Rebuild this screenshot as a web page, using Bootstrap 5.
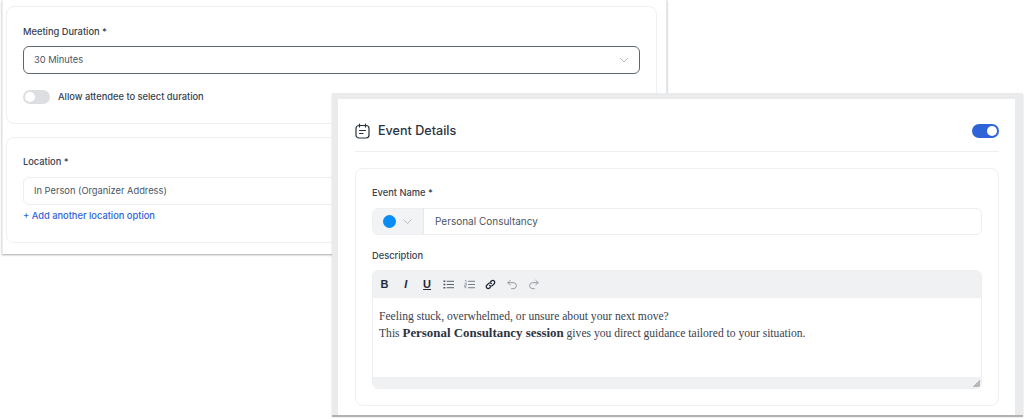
<!DOCTYPE html>
<html lang="en">
<head>
  <meta charset="UTF-8">
  <title>Event Settings</title>
  <meta name="viewport" content="width=device-width, initial-scale=1">
  <link href="https://cdn.jsdelivr.net/npm/bootstrap@5.3.3/dist/css/bootstrap.min.css" rel="stylesheet">
  <style>
    html, body { height: 419px; overflow: hidden; }
    body {
      background: #fff;
      font-family: Inter, "Liberation Sans", sans-serif;
      color: #374151;
      position: relative;
    }
    /* two overlapping screenshots on a free canvas */
    .shot-back {
      position: absolute; left: 2px; top: 0; width: 665px; height: 254px;
      background: #fff; padding: 6px 9px 10px 3px;
      border-left: 1px solid #eceef0;
      border-right: 1px solid #e6e7e9;
      box-shadow: 0 1px 2px rgba(0,0,0,.35);
    }
    .shot-front {
      position: absolute; left: 332px; top: 93px; width: 691px; height: 322px;
      background: #fff; padding: 0 16px 8px 17px;
      border: solid #e9ebed; border-width: 6px 8px 0 6px;
      box-shadow: 0 2px 1px rgba(0,0,0,.3);
      z-index: 2;
    }
    .panel-box { border: 1px solid #eff0f3; border-radius: 8px; background: #fff; }
    .box-duration { height: 118px; padding: 17px 16px 0; margin-bottom: 13px; }
    .box-location { height: 106px; padding: 16px 16px 0; }
    .box-location .field-label, .box-event .field-label { margin-bottom: 7px; }
    .field-label { font-size: 9.3px; font-weight: 500; color: #374151; line-height: 16px; margin-bottom: 6px; display: block; }
    .field-select, .field-input {
      height: 28px; font-size: 9.3px; color: #4b5563; border-radius: 6px;
      border: 1px solid #eceef1; padding: 0 10px; display: flex; align-items: center; background: #fff;
    }
    .field-select { border-color: #5f6673; justify-content: space-between; margin-bottom: 16px; }
    .slide-off, .slide-on { border-radius: 8px; display: inline-flex; align-items: center; flex: none; }
    .slide-off { width: 27px; height: 14px; background: #dcdee2; padding: 2px; }
    .slide-on { width: 27px; height: 14px; background: #2f64d8; padding: 2px; justify-content: flex-end; }
    .slide-knob { width: 10px; height: 10px; border-radius: 50%; background: #fff; }
    .slide-note { font-size: 9.3px; font-weight: 500; color: #374151; }
    .add-link { font-size: 9.3px; font-weight: 500; color: #2f64d8; text-decoration: none; line-height: 14px; display: block; margin-top: 4px; }
    .head-row { height: 53px; padding-top: 11px; border-bottom: 1px solid #eceef1; }
    .head-title { font-size: 12.6px; font-weight: 500; color: #2a3342; margin: 0; line-height: 20px; }
    .box-event { height: 238px; margin-top: 16px; padding: 16px 16px 0; }
    .event-group { height: 27px; border: 1px solid #eceef1; border-radius: 6px; overflow: hidden; margin-bottom: 13px; }
    .swatch-cell { width: 51px; background: #f1f3f4; border-right: 1px solid #e6e8eb; padding-left: 10px; gap: 7px; }
    .swatch-dot { width: 13px; height: 13px; border-radius: 50%; background: #0a8cf5; }
    .event-text { font-size: 10px; color: #4b5563; padding-left: 11px; }
    .editor-box { height: 119px; border: 1px solid #eceef1; border-radius: 6px; overflow: hidden; margin-top: -1px; }
    .editor-tools { height: 27px; background: #eff1f2; padding-left: 6px; gap: 10.3px; }
    .editor-tools svg { width: 11px; height: 11px; }
    .tool-letter { width: 11px; font-family: "Liberation Sans", sans-serif; font-size: 11px; line-height: 11px; color: #1f2937; text-align: center; }
    .editor-body {
      height: 79px; padding: 11px 6px 0; font-family: "Liberation Serif", serif;
      font-size: 11.6px; line-height: 16px; color: #3a414c;
    }
    .editor-body strong { color: #2d343f; font-size: 12.9px; }
    .editor-foot { height: 11px; background: #eff1f2; position: relative; }
    .grip { position: absolute; right: 1px; bottom: 1px; width: 7px; height: 7px; background: linear-gradient(135deg, transparent 50%, #b4b8bc 50%); }
  </style>
</head>
<body>

  <!-- back window -->
  <div class="shot-back">
    <div class="panel-box box-duration">
      <label class="field-label">Meeting Duration *</label>
      <div class="field-select">
        <span>30 Minutes</span>
        <svg width="10" height="6" viewBox="0 0 10 6" fill="none" stroke="#b9bdc4" stroke-width="1"><path d="M1 1l4 4 4-4"/></svg>
      </div>
      <div class="d-flex align-items-center gap-1">
        <span class="slide-off"><span class="slide-knob"></span></span>
        <span class="slide-note ms-1">Allow attendee to select duration</span>
      </div>
    </div>
    <div class="panel-box box-location">
      <label class="field-label">Location *</label>
      <div class="field-input">In Person (Organizer Address)</div>
      <a href="#" class="add-link">+ Add another location option</a>
    </div>
  </div>

  <!-- front window -->
  <div class="shot-front">
    <div class="head-row d-flex align-items-center justify-content-between">
      <div class="d-flex align-items-center gap-2">
        <svg width="15" height="16" viewBox="0 0 15 16" fill="none" stroke="#2a3342" stroke-width="1.2" stroke-linecap="round">
          <rect x="1" y="2.5" width="13" height="12.5" rx="3"/>
          <path d="M4.5 1v3M10.5 1v3M4.5 7.5h6M4.5 10.5h3.5"/>
        </svg>
        <h2 class="head-title">Event Details</h2>
      </div>
      <span class="slide-on"><span class="slide-knob"></span></span>
    </div>

    <div class="panel-box box-event">
      <label class="field-label">Event Name *</label>
      <div class="event-group d-flex">
        <div class="swatch-cell d-flex align-items-center">
          <span class="swatch-dot"></span>
          <svg width="9" height="5" viewBox="0 0 9 5" fill="none" stroke="#b9bdc4" stroke-width="1"><path d="M.5.5l4 4 4-4"/></svg>
        </div>
        <div class="event-text d-flex align-items-center flex-grow-1">Personal Consultancy</div>
      </div>
      <label class="field-label">Description</label>
      <div class="editor-box">
        <div class="editor-tools d-flex align-items-center">
          <span class="tool-letter fw-bold">B</span>
          <span class="tool-letter fw-bold fst-italic">I</span>
          <span class="tool-letter fw-bold text-decoration-underline">U</span>
          <svg viewBox="0 0 12 12" fill="none" stroke="#4b5563" stroke-width="1"><path d="M4 2.5h8M4 6h8M4 9.5h8"/><path d="M.5 2.5h2M.5 6h2M.5 9.5h2" stroke-width="1.6"/></svg>
          <svg viewBox="0 0 12 12" fill="none" stroke="#6b7280" stroke-width="1"><path d="M4.5 2.5H12M4.5 6H12M4.5 9.5H12"/><path d="M1 1.5h1.2v2.5M.6 5h2v1.8h-2v1.7h2M.6 9.5h2" stroke-width=".6"/></svg>
          <svg viewBox="0 0 12 12" fill="none" stroke="#1f2937" stroke-width="1.4" stroke-linecap="round"><path d="M5 7a2 2 0 0 0 3 .2l2-2a2.1 2.1 0 0 0-3-3l-.8.8"/><path d="M7 5a2 2 0 0 0-3-.2l-2 2a2.1 2.1 0 0 0 3 3l.8-.8"/></svg>
          <svg viewBox="0 0 12 12" fill="none" stroke="#8d939b" stroke-width="1" stroke-linecap="round"><path d="M3.5 1.5L1 4l2.5 2.5M1 4h6.5a3.3 3.3 0 0 1 0 6.5H5"/></svg>
          <svg viewBox="0 0 12 12" fill="none" stroke="#8d939b" stroke-width="1" stroke-linecap="round"><path d="M8.5 1.5L11 4 8.5 6.5M11 4H4.5a3.3 3.3 0 0 0 0 6.5H7"/></svg>
        </div>
        <div class="editor-body">
          Feeling stuck, overwhelmed, or unsure about your next move?<br>
          This <strong>Personal Consultancy session</strong> gives you direct guidance tailored to your situation.
        </div>
        <div class="editor-foot"><span class="grip"></span></div>
      </div>
    </div>
  </div>

  <script src="https://cdn.jsdelivr.net/npm/bootstrap@5.3.3/dist/js/bootstrap.bundle.min.js"></script>
</body>
</html>
